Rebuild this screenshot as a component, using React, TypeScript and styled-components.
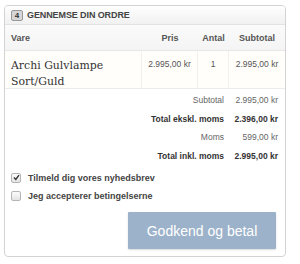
import * as React from "react"
import styled, { createGlobalStyle } from "styled-components"

const Global = createGlobalStyle`
  body {
    margin: 0;
    background: #fff;
    font-family: "Liberation Sans", Arial, sans-serif;
  }
`

const Panel = styled.section`
  width: 280px;
  height: 250px;
  margin: 5px 0 0 4px;
  border: 1px solid #d3d3d3;
  border-radius: 4px;
  overflow: hidden;
  display: flex;
  flex-direction: column;
`

const PanelHeader = styled.header`
  height: 18px;
  display: flex;
  align-items: center;
  gap: 4px;
  padding-left: 6px;
  background: linear-gradient(180deg, #fefefe 0%, #f1f1f1 100%);
  border-bottom: 1px solid #e2e2e2;
  font-size: 9px;
  font-weight: bold;
  letter-spacing: -0.1px;
  color: #444;
`

const StepBadge = styled.span`
  width: 10px;
  height: 9px;
  border: 1px solid #999;
  border-radius: 2px;
  background: #d6d6d6;
  font-size: 8px;
  line-height: 9px;
  text-align: center;
  color: #333;
`

const Table = styled.div`
  display: grid;
  grid-template-columns: 137px 56px 31px 56px;
`

const HeadCell = styled.div<{ $left?: boolean }>`
  height: 25px;
  display: flex;
  align-items: center;
  justify-content: ${(p) => (p.$left ? "flex-start" : "center")};
  padding-left: ${(p) => (p.$left ? "6px" : "0")};
  background: linear-gradient(180deg, #fbfbfb 0%, #f4f4f4 100%);
  border-bottom: 1px solid #e7e7e7;
  font-size: 9px;
  font-weight: bold;
  color: #555;
`

const Cell = styled.div<{ $last?: boolean }>`
  height: 38px;
  box-sizing: border-box;
  display: flex;
  justify-content: center;
  padding-top: 8px;
  border-right: ${(p) => (p.$last ? "none" : "1px solid #f0f0f0")};
  border-bottom: 1px solid #ececec;
  background: #fffefb;
  font-size: 8.5px;
  color: #555;
  white-space: nowrap;
`

const ProductName = styled.div`
  padding: 7px 0 0 6px;
  height: 38px;
  box-sizing: border-box;
  border-right: 1px solid #f0f0f0;
  border-bottom: 1px solid #ececec;
  background: #fffefb;
  font-family: "DejaVu Serif", "Liberation Serif", serif;
  font-size: 10.9px;
  line-height: 16px;
  color: #333;
`

const Totals = styled.div`
  display: grid;
  grid-template-columns: 219px 54px;
  padding-top: 2px;
`

const TotalLabel = styled.div<{ $bold?: boolean }>`
  height: 18.6px;
  display: flex;
  align-items: center;
  justify-content: flex-end;
  font-size: 8.5px;
  font-weight: ${(p) => (p.$bold ? "bold" : "normal")};
  color: ${(p) => (p.$bold ? "#333" : "#666")};
  white-space: nowrap;
`

const Options = styled.div`
  display: flex;
  flex-direction: column;
  gap: 9px;
  padding: 8px 0 0 6px;
`

const OptionRow = styled.label`
  display: flex;
  align-items: center;
  gap: 7px;
  height: 9px;
  font-size: 9px;
  font-weight: bold;
  color: #444;
`

const Box = styled.span`
  width: 8px;
  height: 8px;
  border: 1px solid #b5b5b5;
  border-radius: 2px;
  background: linear-gradient(180deg, #fcfcfc 0%, #e3e3e3 100%);
  display: flex;
  align-items: center;
  justify-content: center;
`

const ButtonRow = styled.div`
  display: flex;
  justify-content: flex-end;
  padding: 12px 9px 0 0;
`

const PayButton = styled.button`
  width: 148px;
  height: 37px;
  border: 0;
  border-radius: 1px;
  background: #9cb2ca;
  box-shadow: 0 1px 2px rgba(0, 0, 0, 0.15);
  color: #fff;
  font-family: "Liberation Sans", Arial, sans-serif;
  font-size: 14px;
`

const Checkbox = ({ checked }: { checked?: boolean }) => (
  <Box>
    {checked && (
      <svg width="7" height="7" viewBox="0 0 7 7">
        <path d="M1 3.6 L2.8 5.4 L6 1.2" stroke="#333" strokeWidth="1.4" fill="none" />
      </svg>
    )}
  </Box>
)

const totals = [
  { label: "Subtotal", value: "2.995,00 kr", bold: false },
  { label: "Total ekskl. moms", value: "2.396,00 kr", bold: true },
  { label: "Moms", value: "599,00 kr", bold: false },
  { label: "Total inkl. moms", value: "2.995,00 kr", bold: true },
]

const App = () => {
  return (
    <>
      <Global />
      <Panel>
        <PanelHeader>
          <StepBadge>4</StepBadge>
          GENNEMSE DIN ORDRE
        </PanelHeader>
        <Table>
          <HeadCell $left>Vare</HeadCell>
          <HeadCell>Pris</HeadCell>
          <HeadCell>Antal</HeadCell>
          <HeadCell>Subtotal</HeadCell>
          <ProductName>
            Archi Gulvlampe
            <br />
            Sort/Guld
          </ProductName>
          <Cell>2.995,00 kr</Cell>
          <Cell>1</Cell>
          <Cell $last>2.995,00 kr</Cell>
        </Table>
        <Totals>
          {totals.map((t) => (
            <React.Fragment key={t.label}>
              <TotalLabel $bold={t.bold}>{t.label}</TotalLabel>
              <TotalLabel $bold={t.bold}>{t.value}</TotalLabel>
            </React.Fragment>
          ))}
        </Totals>
        <Options>
          <OptionRow>
            <Checkbox checked />
            Tilmeld dig vores nyhedsbrev
          </OptionRow>
          <OptionRow>
            <Checkbox />
            Jeg accepterer betingelserne
          </OptionRow>
        </Options>
        <ButtonRow>
          <PayButton>Godkend og betal</PayButton>
        </ButtonRow>
      </Panel>
    </>
  )
}

export default App
